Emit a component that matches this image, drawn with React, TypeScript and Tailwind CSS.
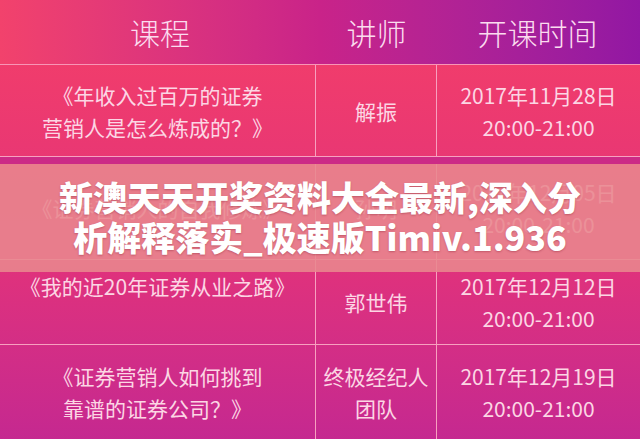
import React from 'react';

type Row = { course: string[]; teacher: string[]; date: string; h: string };

const rows: Row[] = [
  { course: ['《年收入过百万的证券', '营销人是怎么炼成的？》'], teacher: ['解振'], date: '2017年11月28日', h: 'h-[92px]' },
  { course: ['《证券营销人的自我修炼》'], teacher: ['孙明'], date: '2017年12月05日', h: 'h-[103px]' },
  { course: ['《我的近20年证券从业之路》', '\u00a0'], teacher: ['郭世伟'], date: '2017年12月12日', h: 'h-[85px]' },
  { course: ['《证券营销人如何挑到', '靠谱的证券公司？》'], teacher: ['终极经纪人', '团队'], date: '2017年12月19日', h: 'h-[95px]' },
];

const cellClass = 'flex flex-col items-center justify-center text-center border-[#f7a0bf] leading-[32px]';

const App: React.FC = () => {
  return (
    <div
      className="relative h-[439px] w-[640px] overflow-hidden text-[#fcd6e4]"
      style={{ fontFamily: '"Noto Sans CJK SC", "Noto Sans", sans-serif' }}
    >
      <div className="grid h-[65px] grid-cols-[316px_121px_1fr] items-center border-b border-[#f895b5] bg-gradient-to-r from-[#f2426c] via-[#c92389] to-[#9217a3] text-[30px] font-light text-[#fbdcef]">
        <div className="pl-[4px] text-center">课程</div>
        <div className="text-center">讲师</div>
        <div className="pr-[2px] text-center">开课时间</div>
      </div>

      <div className="bg-gradient-to-b from-[#f03c6c] via-[#e2327a] to-[#c52890]">
        {rows.map((r) => (
          <div key={r.date} className={`grid grid-cols-[316px_121px_1fr] border-b border-[#f7a0bf] ${r.h}`}>
            <div className={`${cellClass} border-r text-[21px]`}>
              {r.course.map((c) => (
                <span key={c}>{c}</span>
              ))}
            </div>
            <div className={`${cellClass} border-r text-[21px]`}>
              {r.teacher.map((t) => (
                <span key={t}>{t}</span>
              ))}
            </div>
            <div className={`${cellClass} text-[21px]`}>
              <span>{r.date}</span>
              <span>20:00-21:00</span>
            </div>
          </div>
        ))}
      </div>

      {/* title banner laid over the table */}
      <div className="absolute left-0 top-[157px] flex h-[115px] w-full flex-col items-center justify-center border-t-[7px] border-[#cc2a86] bg-[rgba(232,136,142,0.88)] pb-[2px]">
        <p className="text-center text-[34px] font-black leading-[40px] text-white [text-shadow:0_1px_2px_rgba(120,20,40,0.35)]">
          新澳天天开奖资料大全最新,深入分
          <br />
          析解释落实_极速版Timiv.1.936
        </p>
      </div>
    </div>
  );
};

export default App;
